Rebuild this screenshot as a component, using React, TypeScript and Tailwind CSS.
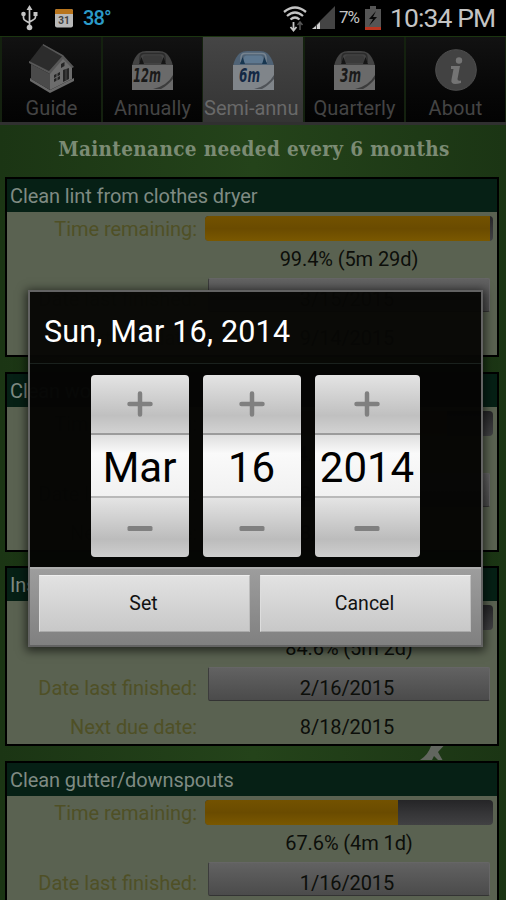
import type { ReactNode } from 'react';
import clsx from 'clsx';

interface Task {
  title: string;
  percent: number;
  remaining: string;
  lastFinished: string;
  nextDue: string;
}

const tasks: Task[] = [
  { title: 'Clean lint from clothes dryer', percent: 99.4, remaining: '5m 29d', lastFinished: '3/15/2015', nextDue: '9/14/2015' },
  { title: 'Clean wood floor', percent: 84.6, remaining: '5m 2d', lastFinished: '2/16/2015', nextDue: '8/18/2015' },
  { title: 'Inspect', percent: 84.6, remaining: '5m 2d', lastFinished: '2/16/2015', nextDue: '8/18/2015' },
  { title: 'Clean gutter/downspouts', percent: 67.6, remaining: '4m 1d', lastFinished: '1/16/2015', nextDue: '7/18/2015' },
];

function HouseIcon() {
  return (
    <svg width="48" height="52" viewBox="0 0 48 52">
      <path d="M2 36 L22 48 L46 36 V39 L22 51 L2 39Z" fill="#686868" />
      <path d="M3 22 L22 32 V48 L3 37Z" fill="#4a4a4a" />
      <path d="M22 30 L35 16 L44 25 V37 L22 48Z" fill="#6c6c6c" />
      <path d="M1 20 L15 2 L36 14 L22 30Z" fill="#2c2c2c" />
      <path d="M15 2 L35 13 L46 25 L44 26 L35 17 L22 32 L1 21 V19 L21 29 L34 14.500 L15 3.500Z" fill="#575757" />
      <path d="M26 33 l6 -3 v7 l-6 3z M35 28 l6 -2 v11 l-6 3z" fill="#242424" />
      <path d="M33 22 l3.500 -2 v4 l-3.500 2z" fill="#242424" />
      <path d="M29 31 v8 M26 36.500 l6 -3" stroke="#6c6c6c" strokeWidth="1" />
      <path d="M38 27 v11" stroke="#4a4a4a" strokeWidth="1" />
    </svg>
  );
}

function CalendarIcon({ label, blue }: { label: string; blue?: boolean }) {
  return (
    <svg width="43" height="41" viewBox="0 0 43 41">
      <path d="M1 16 Q3 7 8 3 Q11 1 15 1 H28 Q32 1 35 3 Q40 7 42 16 V20 H1Z" fill={blue ? '#4f6275' : '#434343'} />
      <path d="M9 12 V8 Q9 3.500 13 3.500 H30 Q34 3.500 34 8 V12" fill="none" stroke={blue ? '#76838f' : '#2c2c2c'} strokeWidth="1.500" />
      <path d="M12 13 V8 Q12 5.500 14.500 5.500 H28.500 Q31 5.500 31 8 V13Z" fill={blue ? '#5e7890' : '#3a3a3a'} />
      <path d="M10.500 7 l2.500 7 h-5z M32.500 7 l2.500 7 h-5z" fill={blue ? '#173650' : '#161616'} />
      <path d="M1 15 H42 V40 H1Z" fill={blue ? '#80858a' : '#6a6a6a'} />
      <path d="M22 39 Q36 36 42 25 V29 Q36 36 30 39Z" fill={blue ? '#4f5358' : '#3c3c3c'} />
      <text
        x={label.length > 2 ? 16 : 17.5}
        y="32"
        textAnchor="middle"
        textLength={label.length > 2 ? 28 : 21}
        lengthAdjust="spacingAndGlyphs"
        fontFamily="DejaVu Sans"
        fontStyle="italic"
        fontWeight="bold"
        fontSize="20"
        fill={blue ? '#132844' : '#1a1a1a'}
      >
        {label}
      </text>
    </svg>
  );
}

function InfoIcon() {
  return (
    <svg width="42" height="42" viewBox="0 0 42 42">
      <circle cx="21" cy="21" r="20.300" fill="#424242" stroke="#4e4e4e" />
      <circle cx="24" cy="11.500" r="3.200" fill="#747474" />
      <path d="M16 17 H25 L22.500 30 Q22.300 32.500 26 31.500 V34 Q15 37 16.500 30.500 L18.500 20 H16Z" fill="#747474" />
    </svg>
  );
}

const tabs: { label: string; icon: ReactNode }[] = [
  { label: 'Guide', icon: <HouseIcon /> },
  { label: 'Annually', icon: <CalendarIcon label="12m" /> },
  { label: 'Semi-annu', icon: <CalendarIcon label="6m" blue /> },
  { label: 'Quarterly', icon: <CalendarIcon label="3m" /> },
  { label: 'About', icon: <InfoIcon /> },
];

function StatusBar() {
  return (
    <div className="flex h-9 items-center bg-black pr-[11px] pl-[21px] text-[#c4c4c4]">
      <svg width="17" height="26" viewBox="0 0 17 26" fill="none" stroke="#c4c4c4" strokeWidth="1.7">
        <path d="M8.500 4 V22 M2.500 9 V13 Q2.500 15 5 16 L8.500 18 M14.500 8 V12 Q14.500 14 12 15 L8.500 17" />
        <path d="M8.500 0 L11.500 5 H5.500Z M12.500 7 h4 v4 h-4z" fill="#c4c4c4" stroke="none" />
        <circle cx="2.500" cy="9" r="2.300" fill="#c4c4c4" stroke="none" />
        <circle cx="8.500" cy="22.500" r="2.800" fill="#c4c4c4" stroke="none" />
      </svg>
      <svg className="ml-[17px]" width="18" height="19" viewBox="0 0 18 19">
        <rect width="18" height="18.500" rx="2" fill="#b9b9b9" />
        <path d="M0 5 V2 Q0 0 2 0 H16 Q18 0 18 2 V5Z" fill="#b8741c" />
        <text x="9" y="15" textAnchor="middle" fontFamily="Roboto" fontWeight="bold" fontSize="10" fill="#444">
          31
        </text>
      </svg>
      <span className="ml-[10px] text-[20px] leading-9 font-medium tracking-[-0.9px] text-[#2b9bc9]">38°</span>
      <div className="ml-auto flex items-center">
        <svg width="24" height="27" viewBox="0 0 24 27" fill="none" stroke="#c4c4c4" strokeWidth="2.300">
          <path d="M1 7 Q12 -2 23 7 M4 11 Q12 4 20 11 M7.500 14.500 Q12 10.500 16.500 14.500" />
          <path d="M10.500 17 V25 M7.500 22 L10.500 25.500 L13.500 22" strokeWidth="1.800" />
          <path d="M17 25 V18 M14.500 20 L17 17 L19.500 20" stroke="#555" strokeWidth="1.500" />
        </svg>
        <svg className="ml-[5px]" width="23" height="24" viewBox="0 0 23 24">
          <path d="M23 0 V23 H0Z" fill="#444" />
          <path d="M0 23 h4 v-3z M5 23 V19 l3 -3 V23z" fill="#d0d0d0" />
        </svg>
        <span className="ml-1 w-[22px] text-[17px] tracking-[-1px]">7%</span>
        <svg className="ml-1" width="16" height="24" viewBox="0 0 16 24">
          <path d="M5 0 H11 V3 H16 V24 H0 V3 H5Z" fill="#555" />
          <path d="M0 21 H16 V24 H0Z" fill="#b83520" />
          <path d="M11 5 L4 13 H8 L4 20 L12 11 H8Z" fill="#080808" />
        </svg>
        <span className="ml-[9px] w-[105px] text-[26.500px] leading-9 tracking-[-0.9px] whitespace-nowrap">10:34 PM</span>
      </div>
    </div>
  );
}

function TabBar() {
  return (
    <div className="flex h-[89px] gap-0.5 border-t border-b-[3px] border-t-[#1b3510] border-b-[#303030] bg-[#14210f] pl-0.5">
      {tabs.map((tab, i) => (
        <div
          key={tab.label}
          className={clsx(
            'flex h-[85px] shrink-0 flex-col items-center overflow-hidden',
            i === 2 ? '-ml-px w-[100px] bg-linear-to-b from-[#454545] to-[#343434]' : 'w-[99px] bg-linear-to-b from-[#121212] to-[#030303]',
          )}
        >
          <div className={clsx('flex h-[57px] items-end justify-center', i === 0 ? 'pb-0' : 'pb-[3px]')}>{tab.icon}</div>
          <span
            className={clsx(
              'w-full overflow-hidden text-[20px] leading-[28px] whitespace-nowrap',
              i === 2 ? 'pl-px text-left text-[#696969]' : 'text-center tracking-[0.1px] text-[#444]',
            )}
          >
            {tab.label}
          </span>
        </div>
      ))}
    </div>
  );
}

function TaskCard({ task }: { task: Task }) {
  return (
    <section className="h-[180px] shrink-0 border-2 border-black bg-[#5a6251] text-[20px]">
      <h2 className="h-[33px] bg-[#062015] pl-[3px] leading-[35px] tracking-[-0.1px] whitespace-nowrap text-[#7f8b83]">{task.title}</h2>
      <div className="flex h-[31px] items-end">
        <span className="w-[190px] text-right leading-[27px] tracking-[-0.05px] text-[#4f5026]">Time remaining:</span>
        <div className="mb-0.5 ml-2 h-[25px] w-[288px] overflow-hidden rounded-[4px] bg-linear-to-b from-[#252527] via-[#343436] to-[#414143]">
          <div className="h-full bg-linear-to-b from-[#735200] via-[#6a4b00] to-[#7a5800]" style={{ width: `${task.percent - 0.6}%` }} />
        </div>
      </div>
      <p className="ml-[198px] h-[35px] w-[288px] text-center leading-8 tracking-[-0.1px] text-[#0c0e0a]">
        {task.percent}% ({task.remaining})
      </p>
      <div className="flex h-[33px]">
        <span className="w-[190px] text-right leading-[43px] text-[#4f5026]">Date last finished:</span>
        <button className="ml-[11px] h-[34px] w-[282px] rounded-[2px] border border-t-[#666] border-r-[#666] border-b-[#333] border-l-[#3c3c3c] bg-linear-to-b from-[#626262] to-[#4b4b4b] pt-1 pr-1 leading-[33px] tracking-[-0.1px] text-[#0c0e0a]">
          {task.lastFinished}
        </button>
      </div>
      <div className="flex h-[43px]">
        <span className="w-[190px] text-right leading-[55px] tracking-[-0.1px] text-[#4f5026]">Next due date:</span>
        <span className="ml-2 w-[284px] text-center leading-[55px] tracking-[-0.1px] text-[#0c0e0a]">{task.nextDue}</span>
      </div>
    </section>
  );
}

function PickerColumn({ value, wide }: { value: string; wide?: boolean }) {
  return (
    <div className={clsx('flex h-[182px] flex-col overflow-hidden rounded-[4px] text-[#808080]', wide ? 'w-[105px]' : 'w-[98px]')}>
      <button className="flex h-[58px] items-center justify-center bg-linear-to-b from-[#e4e4e4] via-[#c0c0c0] via-70% to-[#d2d2d2]">
        <svg width="26" height="26" viewBox="0 0 26 26" stroke="currentColor" strokeWidth="4.500" strokeLinecap="round">
          <path d="M13 2.500 V23.500 M2.500 13 H23.500" />
        </svg>
      </button>
      <div className="h-[65px] border-y-2 border-t-[#9b9b9b] border-b-[#b9b9b9] bg-linear-to-b from-[#dedede] via-[#fafafa] via-30% to-[#f1f1f1] text-center text-[42px] leading-[66px] text-black">
        {value}
      </div>
      <button className="flex h-[59px] items-center justify-center bg-linear-to-b from-[#e4e4e4] via-[#bcbcbc] via-70% to-[#cecece]">
        <svg className="mt-0.5" width="26" height="5" viewBox="0 0 26 5">
          <rect x="0.500" width="25" height="5" rx="1.500" fill="currentColor" />
        </svg>
      </button>
    </div>
  );
}

function DateDialog() {
  return (
    <div className="absolute top-[290px] left-[28px] h-[357px] w-[455px] border-2 border-[#636363] shadow-[0_2px_9px_2px_rgba(0,0,0,0.6)]">
      <div className="flex h-[72px] items-center border-b border-[#1a211d] bg-[#070705]/97 pt-2 pl-3.5 text-[30.500px] text-white">
        <h2 className="tracking-[0.2px]">Sun, Mar 16, 2014</h2>
      </div>
      <div className="flex h-[203px] gap-3.5 bg-[#050504]/98 pt-[11px] pl-[60.500px]">
        <PickerColumn value="Mar" />
        <PickerColumn value="16" />
        <PickerColumn value="2014" wide />
      </div>
      <div className="flex h-[78px] gap-2.5 border-t-2 border-[#adadad] bg-linear-to-b from-[#9d9d9d] to-[#808080] px-[9px] pt-1.5">
        {['Set', 'Cancel'].map((label) => (
          <button
            key={label}
            className="h-[57px] w-[211px] border border-t-[#eee] border-r-[#bdbdbd] border-b-[#aaa] border-l-[#ddd] bg-linear-to-b from-[#e2e2e2] to-[#c8c8c8] pt-px pr-0.5 text-[19.500px] text-[#111]"
          >
            {label}
          </button>
        ))}
      </div>
    </div>
  );
}

export default function App() {
  return (
    <div className="relative flex h-[900px] w-[506px] flex-col overflow-hidden bg-linear-to-r from-[#1b3514] via-[#24431a] to-[#1b3514] font-[Roboto,sans-serif]">
      <StatusBar />
      <TabBar />
      <h1 className="h-[52px] shrink-0 pl-0.5 text-center font-['DejaVu_Serif_Condensed','DejaVu_Serif',serif] text-[20.500px] leading-[49px] font-bold tracking-[0.36px] text-[#7b8b74]">
        Maintenance needed every 6 months
      </h1>
      <main className="flex flex-col gap-[14.700px] pr-[7px] pl-[5px]">
        {tasks.map((task) => (
          <TaskCard key={task.title} task={task} />
        ))}
      </main>
      <svg className="absolute top-[746px] left-[420px]" width="24" height="14" viewBox="0 0 24 14">
        <path d="M0 14 Q8 9 11 0 H23.500 L18 6 L22.500 14 H18 L14 10 L12 14Z" fill="#62665f" />
      </svg>
      <DateDialog />
    </div>
  );
}
